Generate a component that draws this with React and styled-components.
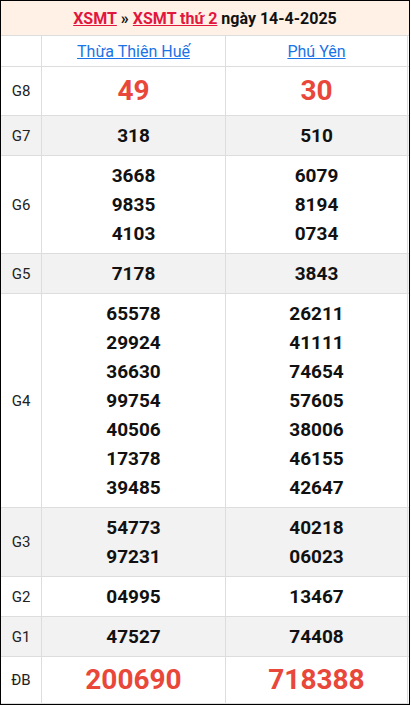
import React from "react";
import styled, { createGlobalStyle } from "styled-components";

const Global = createGlobalStyle`
  html, body { margin: 0; padding: 0; background: #fff; }
  body { font-family: Roboto, "Liberation Sans", Arial, sans-serif; }
  * { box-sizing: border-box; }
`;

const Board = styled.div`
  width: 410px;
  border: 1px solid #000;
  background: #fff;
`;

const Title = styled.div`
  height: 35px;
  background: #fff1e6;
  border-bottom: 1px solid #ddd;
  display: flex;
  align-items: center;
  justify-content: center;
  font-size: 16px;
  font-weight: 700;
  color: #111;
  white-space: pre;
`;

const TitleLink = styled.a`
  color: #e2173e;
  text-decoration: underline;
`;

const Row = styled.div`
  display: grid;
  grid-template-columns: 41px 184px 182px;
  background: ${(p) => (p.$alt ? "#f2f2f2" : "#fff")};
  border-bottom: 1px solid #ddd;
`;

const Cell = styled.div`
  border-right: 1px solid #ddd;
  display: flex;
  flex-direction: column;
  align-items: center;
  justify-content: center;
  padding: ${(p) => (p.$head ? "0" : "5px 0")};
  min-height: ${(p) => (p.$head ? "30px" : "auto")};
`;

const Label = styled.span`
  font-size: 15px;
  color: #222;
`;

const Province = styled.a`
  font-size: 16px;
  color: #1a73e8;
  text-decoration: underline;
`;

const Num = styled.span`
  font-weight: 700;
  color: ${(p) => (p.$big ? "#e8473a" : "#111")};
  font-size: ${(p) => (p.$big ? "28px" : "19px")};
  line-height: ${(p) => (p.$big ? (p.$db ? "36px" : "38px") : "29px")};
`;

const rows = [
  { g: "G8", a: ["49"], b: ["30"], big: true },
  { g: "G7", a: ["318"], b: ["510"] },
  { g: "G6", a: ["3668", "9835", "4103"], b: ["6079", "8194", "0734"] },
  { g: "G5", a: ["7178"], b: ["3843"] },
  {
    g: "G4",
    a: ["65578", "29924", "36630", "99754", "40506", "17378", "39485"],
    b: ["26211", "41111", "74654", "57605", "38006", "46155", "42647"],
  },
  { g: "G3", a: ["54773", "97231"], b: ["40218", "06023"] },
  { g: "G2", a: ["04995"], b: ["13467"] },
  { g: "G1", a: ["47527"], b: ["74408"] },
  { g: "ĐB", a: ["200690"], b: ["718388"], big: true, db: true },
];

export default function App() {
  return (
    <>
      <Global />
      <Board>
        <Title>
          <TitleLink href="#">XSMT</TitleLink>
          {" » "}
          <TitleLink href="#">XSMT thứ 2</TitleLink>
          {" ngày 14-4-2025"}
        </Title>
        <Row>
          <Cell $head />
          <Cell $head>
            <Province href="#">Thừa Thiên Huế</Province>
          </Cell>
          <Cell $head>
            <Province href="#">Phú Yên</Province>
          </Cell>
        </Row>
        {rows.map((r, i) => (
          <Row key={r.g} $alt={i % 2 === 1}>
            <Cell>
              <Label>{r.g}</Label>
            </Cell>
            <Cell>
              {r.a.map((n) => (
                <Num key={n} $big={r.big} $db={r.db}>
                  {n}
                </Num>
              ))}
            </Cell>
            <Cell>
              {r.b.map((n) => (
                <Num key={n} $big={r.big} $db={r.db}>
                  {n}
                </Num>
              ))}
            </Cell>
          </Row>
        ))}
      </Board>
    </>
  );
}
